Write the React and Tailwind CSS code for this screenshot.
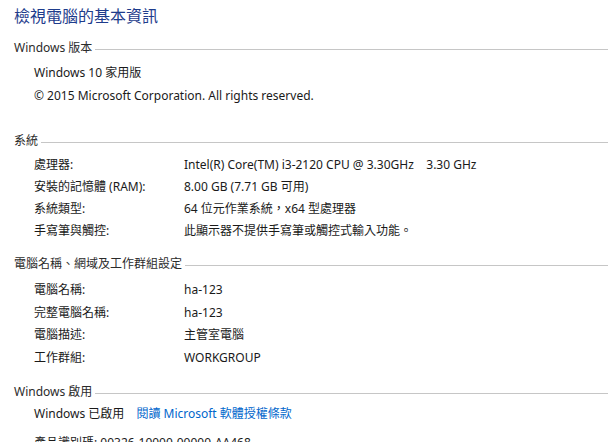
const font = { fontFamily: '"Noto Sans", "Noto Sans CJK TC", sans-serif' }

function Header({ children, className = '' }) {
  return (
    <div className={`flex items-center h-[22px] ${className}`}>
      <span className="text-[12px] text-[#2b2b2b] whitespace-nowrap">{children}</span>
      <div className="flex-1 h-px bg-[#c6c6c6] ml-[3px] mt-[2px]" />
    </div>
  )
}

function Row({ label, value, h = 'h-[22px]' }) {
  return (
    <div className={`flex items-center ${h} pl-[20px] text-[12px] text-[#1a1a1a]`}>
      <span className="w-[150px] shrink-0 whitespace-nowrap">{label}</span>
      <span className="whitespace-pre">{value}</span>
    </div>
  )
}

export default function App() {
  return (
    <div className="w-[608px] h-[442px] overflow-hidden bg-white pl-[14px]" style={font}>
      <div className="pt-[5px] text-[16px] leading-[22px] text-[#1e3c8c]">檢視電腦的基本資訊</div>

      <Header className="mt-[10px]">Windows 版本</Header>
      <div className="mt-[2px] pl-[20px] text-[12px] text-[#1a1a1a]">
        <div className="h-[23px] flex items-center">Windows 10 家用版</div>
        <div className="h-[23px] flex items-center">© 2015 Microsoft Corporation. All rights reserved.</div>
      </div>

      <Header className="mt-[23px]">系統</Header>
      <div className="mt-[2px]">
        <Row label="處理器:" value="Intel(R) Core(TM) i3-2120 CPU @ 3.30GHz    3.30 GHz" />
        <Row label="安裝的記憶體 (RAM):" value="8.00 GB (7.71 GB 可用)" />
        <Row label="系統類型:" value="64 位元作業系統，x64 型處理器" />
        <Row label="手寫筆與觸控:" value="此顯示器不提供手寫筆或觸控式輸入功能。" />
      </div>

      <Header className="mt-[11px]">電腦名稱、網域及工作群組設定</Header>
      <div className="mt-[4px]">
        <Row h="h-[22.5px]" label="電腦名稱:" value="ha-123" />
        <Row h="h-[22.5px]" label="完整電腦名稱:" value="ha-123" />
        <Row h="h-[22.5px]" label="電腦描述:" value="主管室電腦" />
        <Row h="h-[22.5px]" label="工作群組:" value="WORKGROUP" />
      </div>

      <Header className="mt-[12px]">Windows 啟用</Header>
      <div className="pl-[20px] text-[12px] text-[#1a1a1a]">
        <div className="h-[22px] flex items-center gap-[12px]">
          <span>Windows 已啟用</span>
          <a className="text-[#0066cc] cursor-pointer hover:underline">閱讀 Microsoft 軟體授權條款</a>
        </div>
        <div className="mt-[7px] h-[22px] flex items-center">產品識別碼: 00326-10000-00000-AA468</div>
      </div>
    </div>
  )
}
